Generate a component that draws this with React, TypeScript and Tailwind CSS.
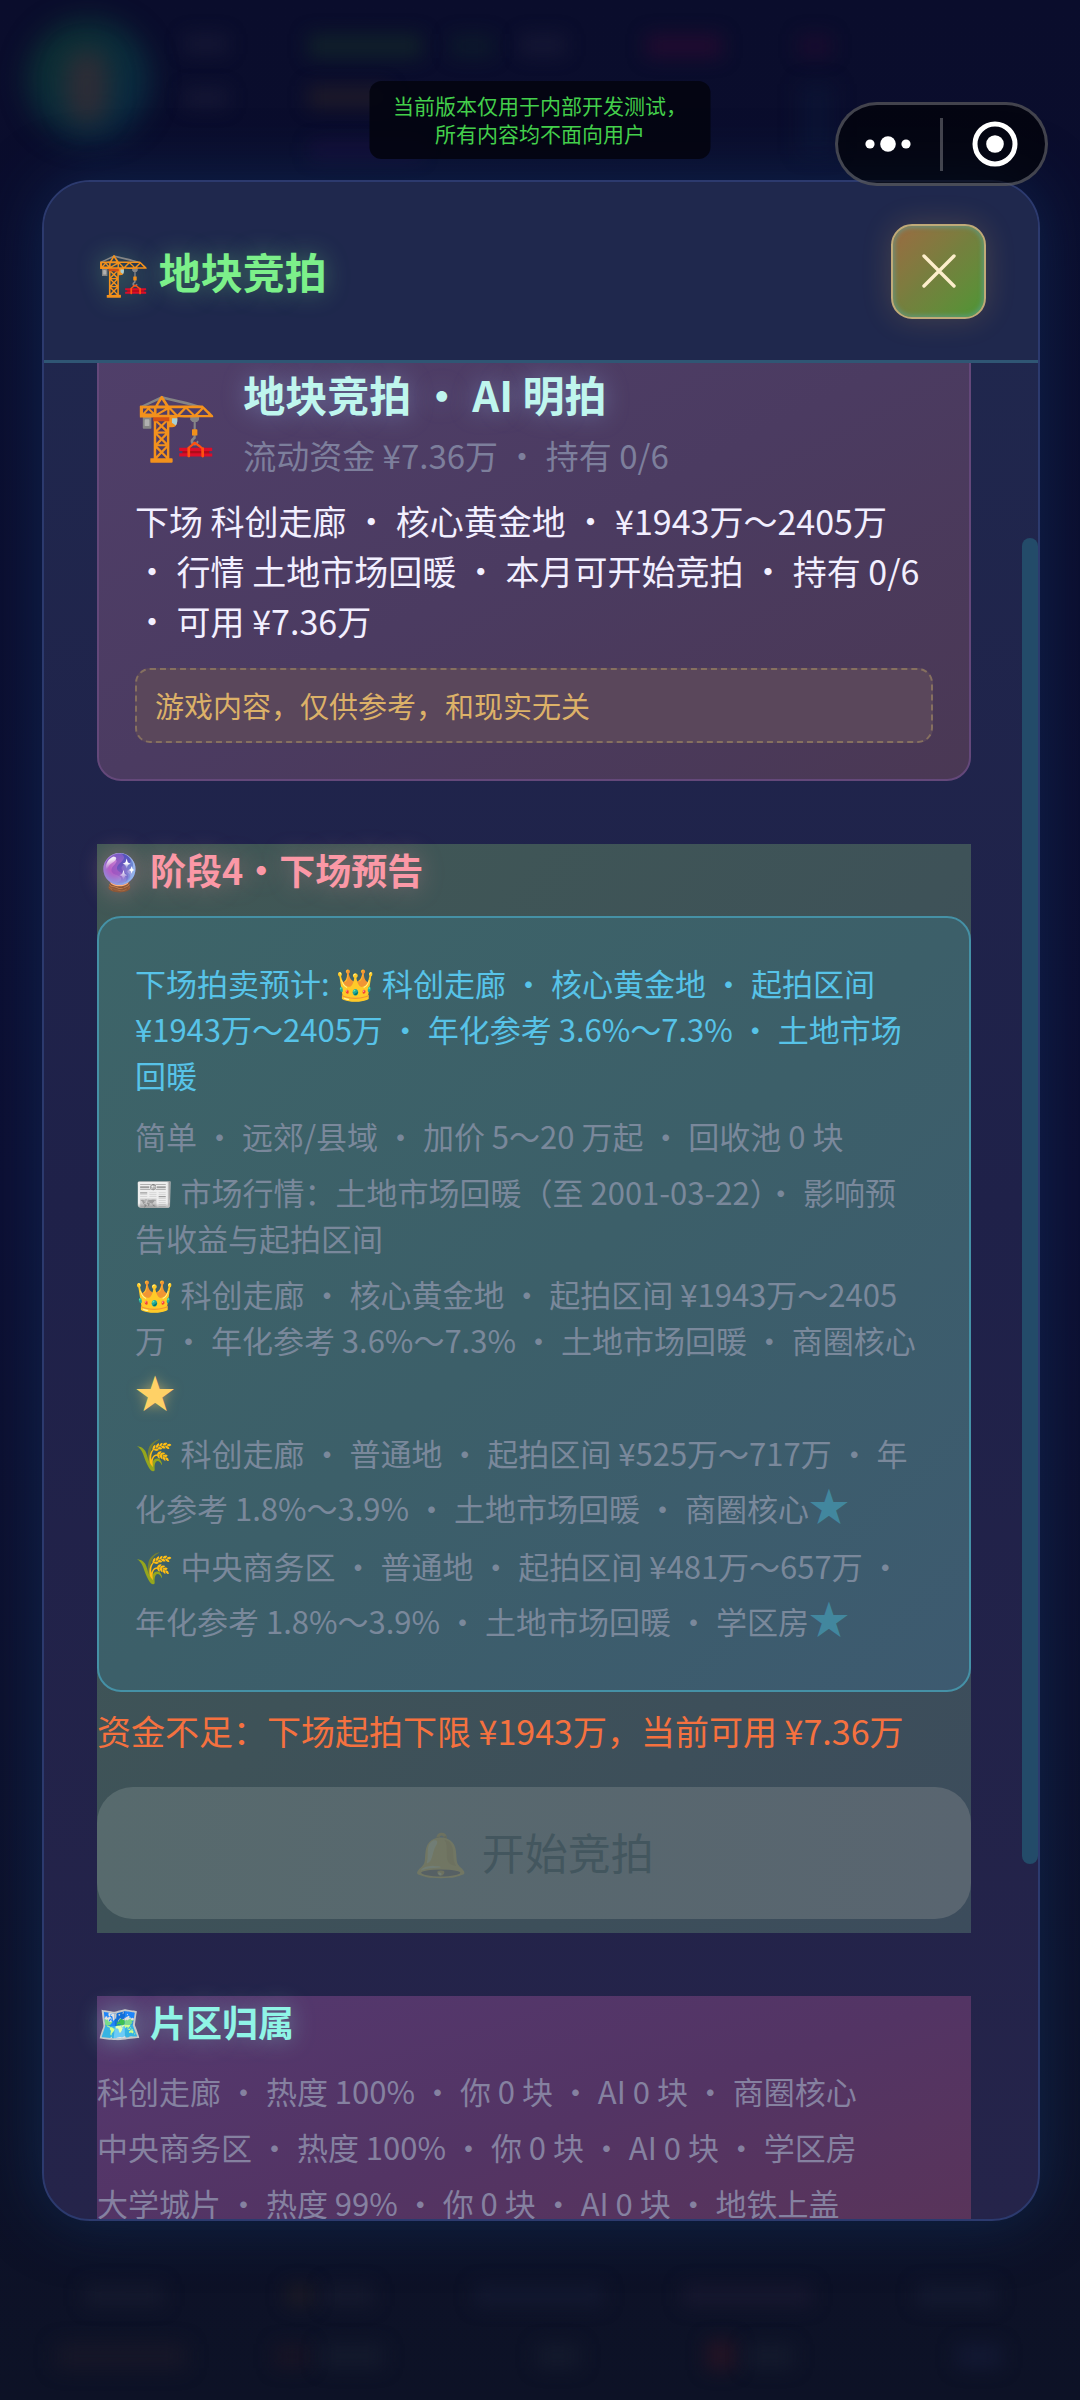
import React from "react";

type Blob = { className: string };

const glows: Blob[] = [
  { className: "left-[28px] top-[20px] h-[120px] w-[122px] rounded-full bg-linear-to-br from-[#0f4a30]/60 to-[#0b3c56]/60 blur-[14px]" },
  { className: "left-[66px] top-[50px] h-[74px] w-[42px] rounded-full bg-[#3c2c34]/70 blur-[12px]" },
  { className: "left-[184px] top-[34px] h-[20px] w-[44px] bg-[#22223e]/40 blur-[9px]" },
  { className: "left-[308px] top-[34px] h-[24px] w-[114px] bg-[#12282a]/70 blur-[9px]" },
  { className: "left-[450px] top-[34px] h-[24px] w-[44px] bg-[#10282a]/40 blur-[9px]" },
  { className: "left-[520px] top-[34px] h-[22px] w-[46px] bg-[#22223e]/40 blur-[9px]" },
  { className: "left-[646px] top-[34px] h-[24px] w-[76px] bg-[#2e0a32]/60 blur-[9px]" },
  { className: "left-[798px] top-[34px] h-[24px] w-[34px] bg-[#2e0a32]/40 blur-[9px]" },
  { className: "left-[184px] top-[88px] h-[20px] w-[44px] bg-[#22223e]/40 blur-[9px]" },
  { className: "left-[308px] top-[86px] h-[22px] w-[80px] bg-[#2a2226]/60 blur-[9px]" },
  { className: "left-[800px] top-[84px] h-[70px] w-[34px] bg-[#0c1c3c]/40 blur-[10px]" },
  { className: "left-[310px] top-[142px] h-[16px] w-[110px] bg-[#200e44]/50 blur-[9px]" },
  { className: "left-[84px] top-[2284px] h-[22px] w-[80px] bg-[#1c2034]/50 blur-[9px]" },
  { className: "left-[286px] top-[2284px] h-[22px] w-[28px] bg-[#241f24]/60 blur-[9px]" },
  { className: "left-[324px] top-[2284px] h-[22px] w-[50px] bg-[#1c2034]/50 blur-[9px]" },
  { className: "left-[474px] top-[2284px] h-[22px] w-[130px] bg-[#161c36]/60 blur-[9px]" },
  { className: "left-[682px] top-[2284px] h-[22px] w-[130px] bg-[#1c1b34]/60 blur-[9px]" },
  { className: "left-[916px] top-[2284px] h-[22px] w-[80px] bg-[#181e36]/60 blur-[9px]" },
  { className: "left-[56px] top-[2344px] h-[24px] w-[130px] bg-[#1e1a2a]/60 blur-[10px]" },
  { className: "left-[274px] top-[2344px] h-[24px] w-[36px] bg-[#221624]/50 blur-[9px]" },
  { className: "left-[320px] top-[2344px] h-[24px] w-[64px] bg-[#181e30]/60 blur-[9px]" },
  { className: "left-[536px] top-[2344px] h-[24px] w-[44px] bg-[#181e30]/60 blur-[9px]" },
  { className: "left-[706px] top-[2340px] h-[30px] w-[30px] bg-[#2c1424]/70 blur-[9px]" },
  { className: "left-[746px] top-[2344px] h-[24px] w-[48px] bg-[#181e30]/60 blur-[9px]" },
  { className: "left-[956px] top-[2344px] h-[24px] w-[46px] bg-[#161c3a]/60 blur-[9px]" },
];

function Star({ tone }: { tone: "gold" | "blue" }) {
  return (
    <span
      className={
        tone === "gold"
          ? "text-[40px] leading-[57px] text-[#ffd166] [text-shadow:0_0_12px_rgba(255,209,102,0.5)]"
          : "text-[40px] leading-[57px] text-[#42879e]"
      }
    >
      ★
    </span>
  );
}

const areas = [
  "科创走廊 · 热度 100% · 你 0 块 · AI 0 块 · 商圈核心",
  "中央商务区 · 热度 100% · 你 0 块 · AI 0 块 · 学区房",
  "大学城片 · 热度 99% · 你 0 块 · AI 0 块 · 地铁上盖",
];

function Capsule() {
  return (
    <div className="absolute right-[32px] top-[102px] flex h-[84px] w-[213px] items-center rounded-full border-[3px] border-white/25 bg-black/60">
      <button type="button" aria-label="更多" className="flex flex-1 items-center justify-center pr-[2px]">
        <svg width="46" height="18" viewBox="0 0 46 18" fill="#fff">
          <circle cx="5" cy="9" r="4.6" />
          <circle cx="23" cy="9" r="7.8" />
          <circle cx="41" cy="9" r="4.6" />
        </svg>
      </button>
      <span className="h-[53px] w-[3px] bg-white/25" />
      <button type="button" aria-label="关闭小程序" className="flex flex-1 items-center justify-center pl-[2px]">
        <svg width="46" height="46" viewBox="0 0 46 46">
          <circle cx="23" cy="23" r="20" fill="none" stroke="#fff" strokeWidth="5" />
          <circle cx="23" cy="23" r="8.8" fill="#fff" />
        </svg>
      </button>
    </div>
  );
}

export default function App() {
  return (
    <div className="relative flex h-screen flex-col overflow-hidden bg-linear-to-b from-[#0a0d2c] via-[#0c0e32] to-[#0d1226] pb-[179px] pl-[42px] pr-[40px] pt-[180px] font-['Noto_Sans_CJK_SC','Noto_Color_Emoji',sans-serif]">
      <div aria-hidden="true">
        {glows.map((g, i) => (
          <div key={i} className={"absolute " + g.className} />
        ))}
      </div>

      <section className="relative flex min-h-0 flex-1 flex-col overflow-hidden rounded-[48px] border-2 border-[#2c3a6e] bg-linear-to-b from-[#20284e] via-[#1f2149] to-[#25244a] shadow-[0_0_60px_rgba(20,60,110,0.5)]">
        <header className="flex h-[181px] shrink-0 items-center justify-between border-b-[3px] border-[#2f5674] bg-[#1f284d] pl-[53px] pr-[52px]">
          <h1 className="text-[42px] font-bold leading-[60px] text-[#7cf08a] [text-shadow:0_0_24px_rgba(124,240,138,0.4)]">
            🏗️ 地块竞拍
          </h1>
          <button
            type="button"
            aria-label="关闭"
            className="flex size-[95px] items-center justify-center rounded-[21px] border-2 border-[#bfaa78] bg-linear-to-br from-[#9a6a42] via-[#74803e] to-[#4a9634] shadow-[0_0_30px_rgba(255,190,80,0.18),inset_0_0_4px_2px_rgba(90,160,150,0.6)]"
          >
            <svg width="34" height="34" viewBox="0 0 34 34" fill="none" stroke="#fdeecb" strokeWidth="3.4" strokeLinecap="round">
              <path d="M2 2 32 32M32 2 2 32" />
            </svg>
          </button>
        </header>

        <main className="min-h-0 flex-1 overflow-hidden pl-[53px] pr-[67px]">
          <article className="-mt-[39px] rounded-[24px] border-2 border-[#64487a] bg-linear-to-br from-[#503f6a] via-[#4b3b61] to-[#4a3854] p-[36px]">
            <div className="flex items-center gap-[26px]">
              <span className="pb-[6px] text-[66px] leading-[78px]">🏗️</span>
              <div>
                <h2 className="text-[42px] font-bold leading-[64px] text-[#bff6ee] [text-shadow:0_0_24px_rgba(160,200,255,0.4)]">
                  地块竞拍 · AI 明拍
                </h2>
                <p className="text-[33px] leading-[58px] text-[#7d7f9c]">流动资金 ¥7.36万 · 持有 0/6</p>
              </div>
            </div>
            <p className="mt-[12px] whitespace-nowrap text-[34px] leading-[50px] text-[#f2efff]">
              下场 科创走廊 · 核心黄金地 · ¥1943万～2405万
              <br />· 行情 土地市场回暖 · 本月可开始竞拍 · 持有 0/6
              <br />· 可用 ¥7.36万
            </p>
            <p className="mt-[22px] rounded-[15px] border-2 border-dashed border-[#86705f] bg-[#5a475b] px-[18px] py-[14px] text-[29px] leading-[43px] text-[#dcb168]">
              游戏内容，仅供参考，和现实无关
            </p>
          </article>

          <section className="mt-[63px] bg-linear-to-br from-[#405855] via-[#3e5258] to-[#3c4c5c] pb-[14px]">
            <h2 className="text-[36px] font-bold leading-[50px] text-[#fb98a6] [text-shadow:0_0_24px_rgba(251,152,166,0.4)]">
              🔮 阶段4·下场预告
            </h2>
            <div className="mt-[22px] whitespace-nowrap rounded-[24px] border-2 border-[#4591a6] bg-linear-to-br from-[#3d6468] via-[#3c5f69] to-[#3d5a70] px-[36px] pb-[44px] pt-[42px] text-[31px] leading-[46px] text-[#7a889b]">
              <p className="text-[#57c3e8]">
                下场拍卖预计: 👑 科创走廊 · 核心黄金地 · 起拍区间
                <br />
                ¥1943万～2405万 · 年化参考 3.6%～7.3% · 土地市场
                <br />
                回暖
              </p>
              <p className="mt-[15px]">简单 · 远郊/县域 · 加价 5～20 万起 · 回收池 0 块</p>
              <p className="mt-[10px]">
                📰 市场行情：土地市场回暖（至 2001-03-22）· 影响预
                <br />
                告收益与起拍区间
              </p>
              <p className="mt-[10px]">
                👑 科创走廊 · 核心黄金地 · 起拍区间 ¥1943万～2405
                <br />万 · 年化参考 3.6%～7.3% · 土地市场回暖 · 商圈核心
                <br />
                <Star tone="gold" />
              </p>
              <p className="mt-[10px]">
                🌾 科创走廊 · 普通地 · 起拍区间 ¥525万～717万 · 年
                <br />
                化参考 1.8%～3.9% · 土地市场回暖 · 商圈核心
                <Star tone="blue" />
              </p>
              <p className="mt-[10px]">
                🌾 中央商务区 · 普通地 · 起拍区间 ¥481万～657万 ·
                <br />
                年化参考 1.8%～3.9% · 土地市场回暖 · 学区房
                <Star tone="blue" />
              </p>
            </div>
            <p className="mt-[14px] whitespace-nowrap text-[34px] leading-[50px] text-[#f5713f]">
              资金不足：下场起拍下限 ¥1943万，当前可用 ¥7.36万
            </p>
            <button
              type="button"
              disabled
              className="mt-[31px] flex h-[132px] w-full items-center justify-center rounded-[36px] bg-linear-to-r from-[#576a6d] to-[#596570] pb-[3px] text-[43px] text-[#43565e]"
            >
              <span className="mr-[14px] opacity-15">🔔</span>开始竞拍
            </button>
          </section>

          <section className="mt-[63px] bg-linear-to-br from-[#54386f] via-[#533464] to-[#5a3458] pb-[40px]">
            <h2 className="text-[36px] font-bold leading-[50px] text-[#8ff5e6] [text-shadow:0_0_24px_rgba(143,245,230,0.4)]">
              🗺️ 片区归属
            </h2>
            <ul className="mt-[22px] flex flex-col gap-[10px] whitespace-nowrap text-[31px] leading-[46px] text-[#8581a0]">
              {areas.map((a) => (
                <li key={a}>{a}</li>
              ))}
            </ul>
          </section>
        </main>

        <span aria-hidden="true" className="absolute right-0 top-[356px] h-[1326px] w-[16px] rounded-full bg-[#234b69]" />
      </section>

      <p className="absolute left-1/2 top-[81px] w-[341px] -translate-x-1/2 rounded-[12px] bg-[#030410]/90 pb-[12px] pt-[10px] text-center text-[21px] leading-[28px] text-[#43cf4b]">
        当前版本仅用于内部开发测试，
        <br />
        所有内容均不面向用户
      </p>
      <Capsule />
    </div>
  );
}
